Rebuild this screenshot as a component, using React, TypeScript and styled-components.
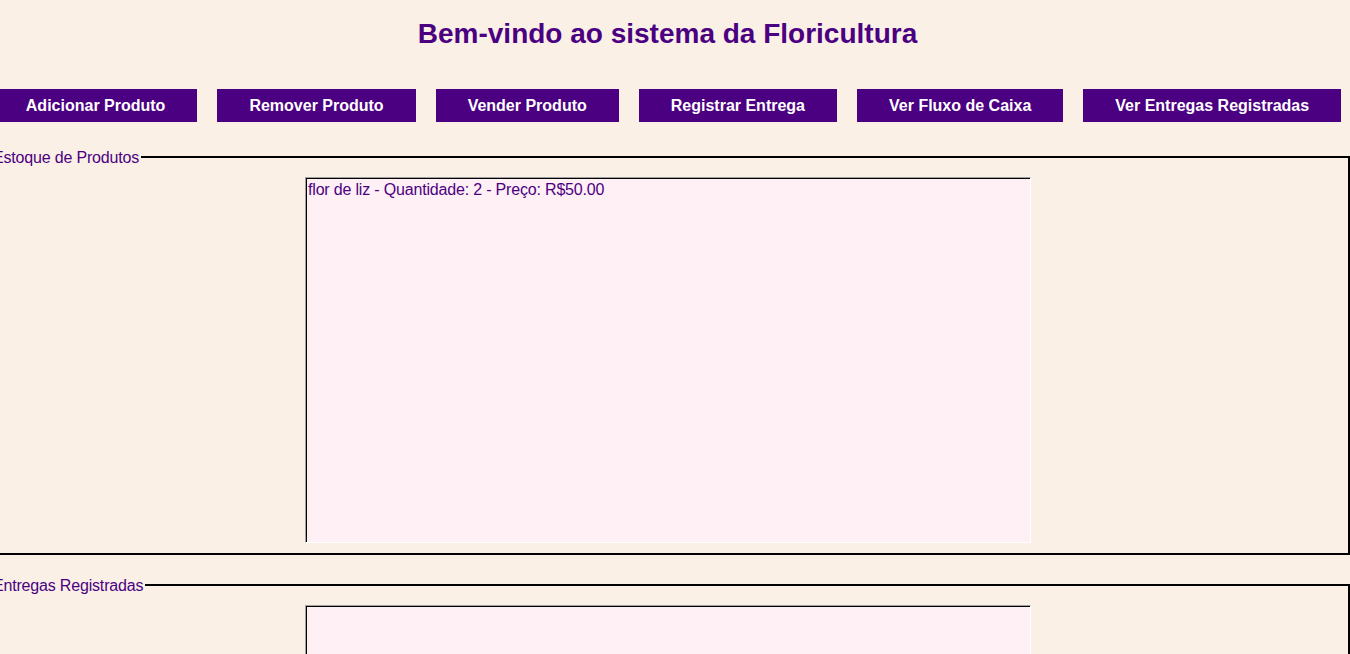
import React from "react";
import styled, { createGlobalStyle } from "styled-components";

const GlobalStyle = createGlobalStyle`
  html, body {
    margin: 0;
    padding: 0;
    background: #faf0e6;
    overflow: hidden;
  }
  body {
    font-family: "Liberation Sans", Arial, sans-serif;
  }
`;

const Page = styled.div`
  width: 1363px;
  margin-left: -14px;
  display: flex;
  flex-direction: column;
  align-items: center;
`;

const Title = styled.h1`
  margin: 18px 0 0;
  font-size: 28px;
  line-height: 32px;
  font-weight: bold;
  color: #4b0082;
  text-align: center;
`;

const Toolbar = styled.div`
  margin-top: 39px;
  display: flex;
  justify-content: center;
  gap: 20px;
  white-space: nowrap;
`;

const ActionButton = styled.button`
  height: 33px;
  padding: 0 32px;
  border: none;
  background: #4b0082;
  color: #ffffff;
  font-family: "Liberation Sans", Arial, sans-serif;
  font-size: 16px;
  font-weight: bold;
  cursor: pointer;
  flex: none;
`;

const Section = styled.fieldset<{ $top: number }>`
  box-sizing: border-box;
  width: calc(100% + 1px);
  align-self: flex-start;
  margin: ${(p) => p.$top}px 0 0;
  padding: 11px 0 10px;
  border: 2px solid #000000;
  min-width: 0;
`;

const Legend = styled.legend`
  margin-left: 3px;
  padding: 2px 2px 0;
  font-size: 16px;
  line-height: 16px;
  letter-spacing: -0.18px;
  color: #4b0082;
`;

const ListBox = styled.textarea`
  display: block;
  box-sizing: border-box;
  width: 726px;
  height: 366px;
  margin: 0 auto;
  padding: 3px 2px 2px;
  background: #fff0f5;
  color: #4b0082;
  font-family: "Liberation Sans", Arial, sans-serif;
  font-size: 16px;
  line-height: 18px;
  letter-spacing: -0.18px;
  border: 1px solid;
  border-color: #a0a0a0 #ffffff #ffffff #a0a0a0;
  box-shadow: inset 1px 1px 0 #000000;
  resize: none;
  outline: none;
  overflow: hidden;
`;

const actions = [
  "Adicionar Produto",
  "Remover Produto",
  "Vender Produto",
  "Registrar Entrega",
  "Ver Fluxo de Caixa",
  "Ver Entregas Registradas",
];

export default function App() {
  return (
    <>
      <GlobalStyle />
      <Page>
        <Title>Bem-vindo ao sistema da Floricultura</Title>
        <Toolbar>
          {actions.map((a) => (
            <ActionButton key={a}>{a}</ActionButton>
          ))}
        </Toolbar>
        <Section $top={26}>
          <Legend>Estoque de Produtos</Legend>
          <ListBox
            readOnly
            value={"flor de liz - Quantidade: 2 - Preço: R$50.00"}
          />
        </Section>
        <Section $top={21}>
          <Legend>Entregas Registradas</Legend>
          <ListBox readOnly value="" />
        </Section>
      </Page>
    </>
  );
}
